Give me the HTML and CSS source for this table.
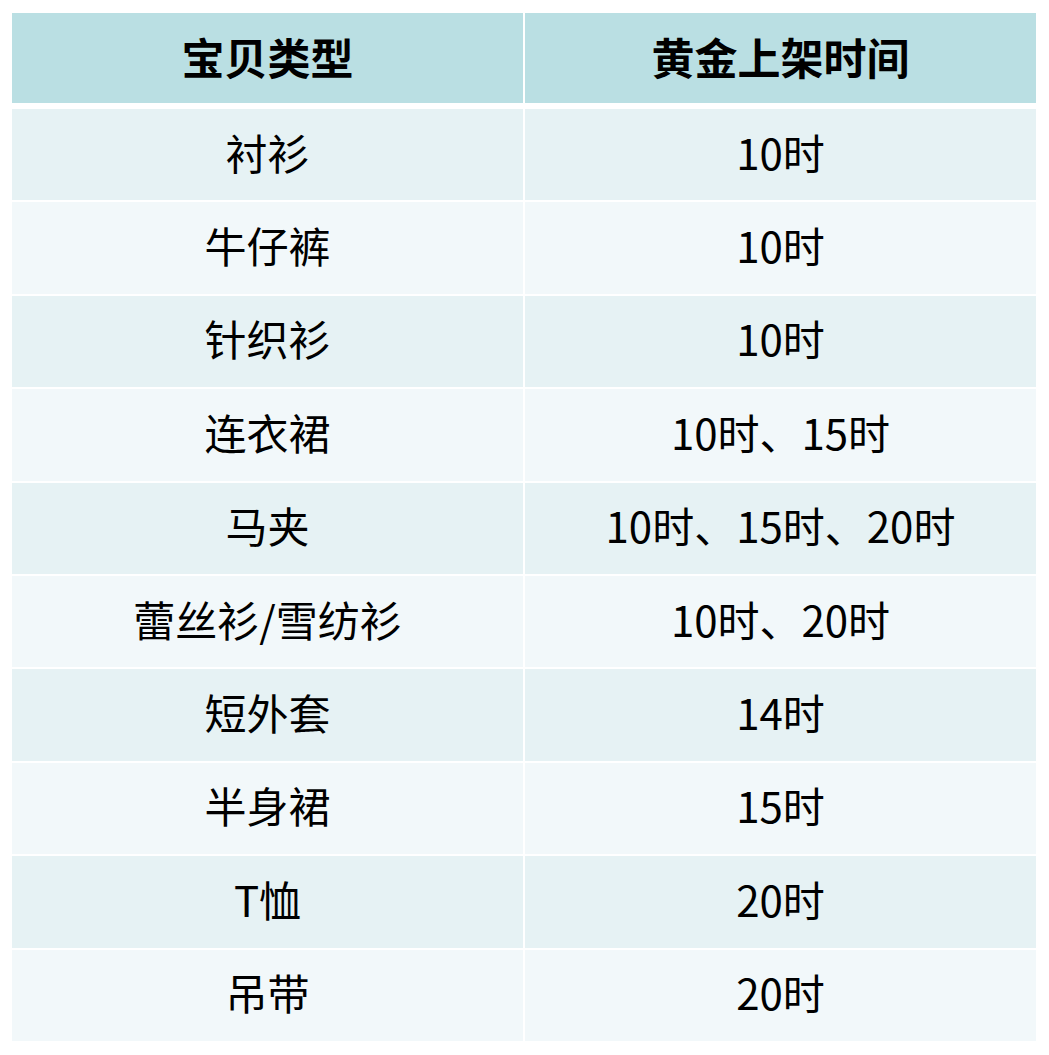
FILE: index.html
```html
<!DOCTYPE html>
<html lang="zh-CN">
<head>
<meta charset="utf-8">
<title>宝贝类型 黄金上架时间</title>
<link rel="stylesheet" href="styles.css">
</head>
<body>
<div class="table">
  <div class="cell head">宝贝类型</div>
  <div class="cell head">黄金上架时间</div>
  <div class="cell odd first">衬衫</div><div class="cell odd first">10时</div>
  <div class="cell even">牛仔裤</div><div class="cell even">10时</div>
  <div class="cell odd">针织衫</div><div class="cell odd">10时</div>
  <div class="cell even">连衣裙</div><div class="cell even">10时、15时</div>
  <div class="cell odd">马夹</div><div class="cell odd">10时、15时、20时</div>
  <div class="cell even">蕾丝衫/雪纺衫</div><div class="cell even">10时、20时</div>
  <div class="cell odd">短外套</div><div class="cell odd">14时</div>
  <div class="cell even">半身裙</div><div class="cell even">15时</div>
  <div class="cell odd">T恤</div><div class="cell odd">20时</div>
  <div class="cell even">吊带</div><div class="cell even">20时</div>
</div>
</body>
</html>
```
FILE: styles.css
```css
html, body {
  margin: 0;
  padding: 0;
  background: #ffffff;
}
body {
  font-family: "Noto Sans CJK SC", "Noto Sans", sans-serif;
  color: #000000;
}
.table {
  margin: 13px 0 0 12px;
  width: 1024px;
  display: grid;
  grid-template-columns: 511px 511px;
  column-gap: 2px;
  row-gap: 2px;
  grid-auto-rows: auto;
}
.cell {
  display: flex;
  align-items: center;
  justify-content: center;
  box-sizing: border-box;
  height: 91.4px;
  padding-bottom: 6px;
  font-size: 42px;
  line-height: 1;
}
.head {
  height: 90px;
  padding-bottom: 3px;
  background: #badfe3;
  font-weight: 700;
  font-size: 43px;
}
.first {
  margin-top: 4px;
}
.odd {
  background: #e6f2f4;
}
.even {
  background: #f2f8fa;
}
```
